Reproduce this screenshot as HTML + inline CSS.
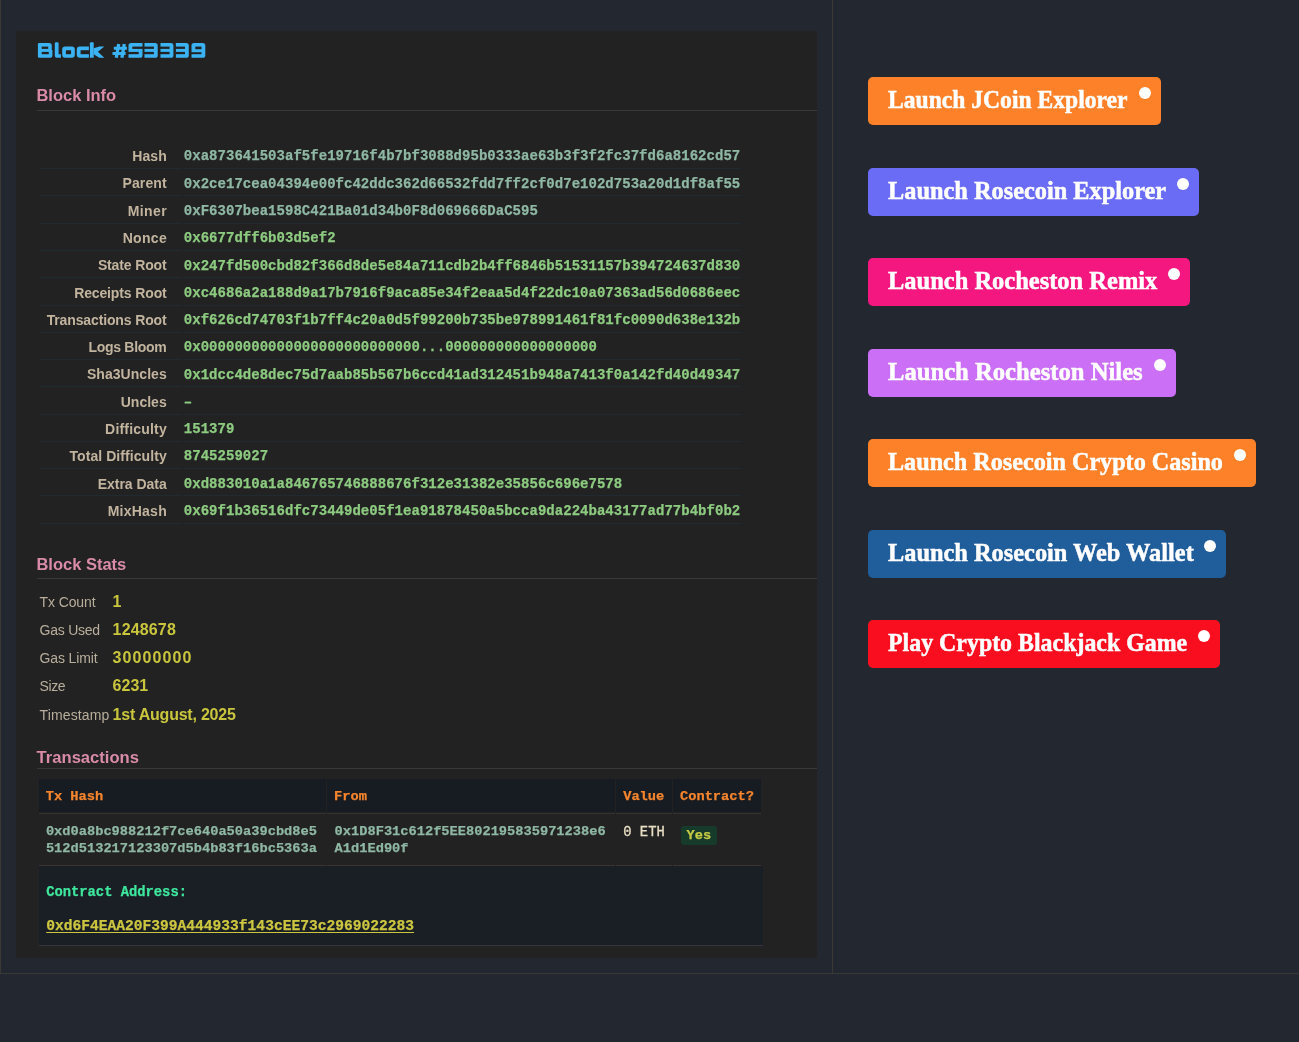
<!DOCTYPE html>
<html><head><meta charset="utf-8"><style>
html,body{margin:0;padding:0;width:1299px;height:1042px;overflow:hidden;background:#23272f;}
body>div{position:absolute;}
.t{position:absolute;line-height:0;white-space:nowrap;}
body{will-change:transform;}
</style></head><body>
<div style="left:0.00px;top:0.00px;width:1.00px;height:973.00px;background:#3a3936;"></div>
<div style="left:832.00px;top:0.00px;width:1.00px;height:973.00px;background:#3a3936;"></div>
<div style="left:0.00px;top:973.00px;width:1299.00px;height:1.00px;background:#3a3936;"></div>
<div style="left:16.00px;top:31.00px;width:801.00px;height:927.00px;background:#222222;"></div>
<div class="t" style="left:36.40px;top:86.00px;font:700 16.5px 'Liberation Sans', sans-serif;color:#d98ba8;">Block Info</div>
<div style="left:37.00px;top:110.00px;width:780.00px;height:1.00px;background:#3b3935;"></div>
<div class="t" style="right:1132.20px;top:148.00px;font:700 14px 'Liberation Sans', sans-serif;color:#c2b49e;text-align:right;letter-spacing:0.100px">Hash</div>
<div class="t" style="left:183.80px;top:148.00px;font:700 14px 'Liberation Mono', monospace;color:#8fb8a4;letter-spacing:0.03px;-webkit-text-stroke:0.25px #8fb8a4">0xa873641503af5fe19716f4b7bf3088d95b0333ae63b3f3f2fc37fd6a8162cd57</div>
<div style="left:39.00px;top:168.10px;width:143.00px;height:1.00px;background:#1f2a31;"></div>
<div style="left:184.00px;top:168.10px;width:557.00px;height:1.00px;background:#1f2a31;"></div>
<div class="t" style="right:1132.17px;top:175.00px;font:700 14px 'Liberation Sans', sans-serif;color:#c2b49e;text-align:right;letter-spacing:0.133px">Parent</div>
<div class="t" style="left:183.80px;top:176.00px;font:700 14px 'Liberation Mono', monospace;color:#8fb8a4;letter-spacing:0.03px;-webkit-text-stroke:0.25px #8fb8a4">0x2ce17cea04394e00fc42ddc362d66532fdd7ff2cf0d7e102d753a20d1df8af55</div>
<div style="left:39.00px;top:195.38px;width:143.00px;height:1.00px;background:#1f2a31;"></div>
<div style="left:184.00px;top:195.38px;width:557.00px;height:1.00px;background:#1f2a31;"></div>
<div class="t" style="right:1131.90px;top:203.00px;font:700 14px 'Liberation Sans', sans-serif;color:#c2b49e;text-align:right;letter-spacing:0.400px">Miner</div>
<div class="t" style="left:183.80px;top:203.00px;font:700 14px 'Liberation Mono', monospace;color:#8fb8a4;letter-spacing:0.03px;-webkit-text-stroke:0.25px #8fb8a4">0xF6307bea1598C421Ba01d34b0F8d069666DaC595</div>
<div style="left:39.00px;top:222.66px;width:143.00px;height:1.00px;background:#1f2a31;"></div>
<div style="left:184.00px;top:222.66px;width:557.00px;height:1.00px;background:#1f2a31;"></div>
<div class="t" style="right:1132.00px;top:230.00px;font:700 14px 'Liberation Sans', sans-serif;color:#c2b49e;text-align:right;letter-spacing:0.300px">Nonce</div>
<div class="t" style="left:183.80px;top:230.00px;font:700 14px 'Liberation Mono', monospace;color:#8dcb80;letter-spacing:0.03px;-webkit-text-stroke:0.25px #8dcb80">0x6677dff6b03d5ef2</div>
<div style="left:39.00px;top:249.94px;width:143.00px;height:1.00px;background:#1f2a31;"></div>
<div style="left:184.00px;top:249.94px;width:557.00px;height:1.00px;background:#1f2a31;"></div>
<div class="t" style="right:1132.43px;top:257.00px;font:700 14px 'Liberation Sans', sans-serif;color:#c2b49e;text-align:right;letter-spacing:-0.130px">State Root</div>
<div class="t" style="left:183.80px;top:258.00px;font:700 14px 'Liberation Mono', monospace;color:#8dcb80;letter-spacing:0.03px;-webkit-text-stroke:0.25px #8dcb80">0x247fd500cbd82f366d8de5e84a711cdb2b4ff6846b51531157b394724637d830</div>
<div style="left:39.00px;top:277.22px;width:143.00px;height:1.00px;background:#1f2a31;"></div>
<div style="left:184.00px;top:277.22px;width:557.00px;height:1.00px;background:#1f2a31;"></div>
<div class="t" style="right:1132.43px;top:285.00px;font:700 14px 'Liberation Sans', sans-serif;color:#c2b49e;text-align:right;letter-spacing:-0.131px">Receipts Root</div>
<div class="t" style="left:183.80px;top:285.00px;font:700 14px 'Liberation Mono', monospace;color:#8dcb80;letter-spacing:0.03px;-webkit-text-stroke:0.25px #8dcb80">0xc4686a2a188d9a17b7916f9aca85e34f2eaa5d4f22dc10a07363ad56d0686eec</div>
<div style="left:39.00px;top:304.50px;width:143.00px;height:1.00px;background:#1f2a31;"></div>
<div style="left:184.00px;top:304.50px;width:557.00px;height:1.00px;background:#1f2a31;"></div>
<div class="t" style="right:1132.43px;top:312.00px;font:700 14px 'Liberation Sans', sans-serif;color:#c2b49e;text-align:right;letter-spacing:-0.129px">Transactions Root</div>
<div class="t" style="left:183.80px;top:312.00px;font:700 14px 'Liberation Mono', monospace;color:#8dcb80;letter-spacing:0.03px;-webkit-text-stroke:0.25px #8dcb80">0xf626cd74703f1b7ff4c20a0d5f99200b735be978991461f81fc0090d638e132b</div>
<div style="left:39.00px;top:331.78px;width:143.00px;height:1.00px;background:#1f2a31;"></div>
<div style="left:184.00px;top:331.78px;width:557.00px;height:1.00px;background:#1f2a31;"></div>
<div class="t" style="right:1132.59px;top:339.00px;font:700 14px 'Liberation Sans', sans-serif;color:#c2b49e;text-align:right;letter-spacing:-0.290px">Logs Bloom</div>
<div class="t" style="left:183.80px;top:339.00px;font:700 14px 'Liberation Mono', monospace;color:#8dcb80;letter-spacing:0.03px;-webkit-text-stroke:0.25px #8dcb80">0x00000000000000000000000000...000000000000000000</div>
<div style="left:39.00px;top:359.06px;width:143.00px;height:1.00px;background:#1f2a31;"></div>
<div style="left:184.00px;top:359.06px;width:557.00px;height:1.00px;background:#1f2a31;"></div>
<div class="t" style="right:1132.26px;top:366.00px;font:700 14px 'Liberation Sans', sans-serif;color:#c2b49e;text-align:right;letter-spacing:0.040px">Sha3Uncles</div>
<div class="t" style="left:183.80px;top:367.00px;font:700 14px 'Liberation Mono', monospace;color:#8dcb80;letter-spacing:0.03px;-webkit-text-stroke:0.25px #8dcb80">0x1dcc4de8dec75d7aab85b567b6ccd41ad312451b948a7413f0a142fd40d49347</div>
<div style="left:39.00px;top:386.34px;width:143.00px;height:1.00px;background:#1f2a31;"></div>
<div style="left:184.00px;top:386.34px;width:557.00px;height:1.00px;background:#1f2a31;"></div>
<div class="t" style="right:1132.28px;top:394.00px;font:700 14px 'Liberation Sans', sans-serif;color:#c2b49e;text-align:right;letter-spacing:0.017px">Uncles</div>
<div class="t" style="left:183.80px;top:394.00px;font:700 14px 'Liberation Mono', monospace;color:#8dcb80;letter-spacing:0.03px;-webkit-text-stroke:0.25px #8dcb80">–</div>
<div style="left:39.00px;top:413.62px;width:143.00px;height:1.00px;background:#1f2a31;"></div>
<div style="left:184.00px;top:413.62px;width:557.00px;height:1.00px;background:#1f2a31;"></div>
<div class="t" style="right:1132.11px;top:421.00px;font:700 14px 'Liberation Sans', sans-serif;color:#c2b49e;text-align:right;letter-spacing:0.190px">Difficulty</div>
<div class="t" style="left:183.80px;top:421.00px;font:700 14px 'Liberation Mono', monospace;color:#8dcb80;letter-spacing:0.03px;-webkit-text-stroke:0.25px #8dcb80">151379</div>
<div style="left:39.00px;top:440.90px;width:143.00px;height:1.00px;background:#1f2a31;"></div>
<div style="left:184.00px;top:440.90px;width:557.00px;height:1.00px;background:#1f2a31;"></div>
<div class="t" style="right:1132.23px;top:448.00px;font:700 14px 'Liberation Sans', sans-serif;color:#c2b49e;text-align:right;letter-spacing:0.069px">Total Difficulty</div>
<div class="t" style="left:183.80px;top:448.00px;font:700 14px 'Liberation Mono', monospace;color:#8dcb80;letter-spacing:0.03px;-webkit-text-stroke:0.25px #8dcb80">8745259027</div>
<div style="left:39.00px;top:468.18px;width:143.00px;height:1.00px;background:#1f2a31;"></div>
<div style="left:184.00px;top:468.18px;width:557.00px;height:1.00px;background:#1f2a31;"></div>
<div class="t" style="right:1132.33px;top:476.00px;font:700 14px 'Liberation Sans', sans-serif;color:#c2b49e;text-align:right;letter-spacing:-0.030px">Extra Data</div>
<div class="t" style="left:183.80px;top:476.00px;font:700 14px 'Liberation Mono', monospace;color:#8dcb80;letter-spacing:0.03px;-webkit-text-stroke:0.25px #8dcb80">0xd883010a1a846765746888676f312e31382e35856c696e7578</div>
<div style="left:39.00px;top:495.46px;width:143.00px;height:1.00px;background:#1f2a31;"></div>
<div style="left:184.00px;top:495.46px;width:557.00px;height:1.00px;background:#1f2a31;"></div>
<div class="t" style="right:1132.06px;top:503.00px;font:700 14px 'Liberation Sans', sans-serif;color:#c2b49e;text-align:right;letter-spacing:0.243px">MixHash</div>
<div class="t" style="left:183.80px;top:503.00px;font:700 14px 'Liberation Mono', monospace;color:#8dcb80;letter-spacing:0.03px;-webkit-text-stroke:0.25px #8dcb80">0x69f1b36516dfc73449de05f1ea91878450a5bcca9da224ba43177ad77b4bf0b2</div>
<div style="left:39.00px;top:522.74px;width:143.00px;height:1.00px;background:#1f2a31;"></div>
<div style="left:184.00px;top:522.74px;width:557.00px;height:1.00px;background:#1f2a31;"></div>
<div class="t" style="left:36.40px;top:555.00px;font:700 16.5px 'Liberation Sans', sans-serif;color:#d98ba8;">Block Stats</div>
<div style="left:37.00px;top:578.00px;width:780.00px;height:1.00px;background:#3b3935;"></div>
<div class="t" style="left:39.60px;top:594.00px;font:400 14px 'Liberation Sans', sans-serif;color:#b9ae9c;letter-spacing:-0.12px">Tx Count</div>
<div class="t" style="left:112.60px;top:593.00px;font:700 16px 'Liberation Sans', sans-serif;color:#c9c63e;">1</div>
<div class="t" style="left:39.60px;top:622.00px;font:400 14px 'Liberation Sans', sans-serif;color:#b9ae9c;letter-spacing:-0.25px">Gas Used</div>
<div class="t" style="left:112.60px;top:621.00px;font:700 16px 'Liberation Sans', sans-serif;color:#c9c63e;letter-spacing:0.15px">1248678</div>
<div class="t" style="left:39.60px;top:650.00px;font:400 14px 'Liberation Sans', sans-serif;color:#b9ae9c;letter-spacing:-0.15px">Gas Limit</div>
<div class="t" style="left:112.60px;top:649.00px;font:700 16px 'Liberation Sans', sans-serif;color:#c9c63e;letter-spacing:1.1px">30000000</div>
<div class="t" style="left:39.60px;top:678.00px;font:400 14px 'Liberation Sans', sans-serif;color:#b9ae9c;letter-spacing:-0.40px">Size</div>
<div class="t" style="left:112.60px;top:677.00px;font:700 16px 'Liberation Sans', sans-serif;color:#c9c63e;">6231</div>
<div class="t" style="left:39.60px;top:707.00px;font:400 14px 'Liberation Sans', sans-serif;color:#b9ae9c;letter-spacing:0.12px">Timestamp</div>
<div class="t" style="left:112.60px;top:706.00px;font:700 16px 'Liberation Sans', sans-serif;color:#c9c63e;letter-spacing:-0.22px">1st August, 2025</div>
<div class="t" style="left:36.60px;top:748.00px;font:700 16.6px 'Liberation Sans', sans-serif;color:#d98ba8;">Transactions</div>
<div style="left:37.00px;top:768.00px;width:780.00px;height:1.00px;background:#3b3935;"></div>
<div style="left:38.90px;top:779.00px;width:286.70px;height:33.00px;background:#171b22;"></div>
<div style="left:38.90px;top:812.60px;width:286.70px;height:1.00px;background:#35322f;"></div>
<div style="left:38.90px;top:865.00px;width:286.70px;height:1.00px;background:#3a3530;"></div>
<div style="left:327.30px;top:779.00px;width:287.90px;height:33.00px;background:#171b22;"></div>
<div style="left:327.30px;top:812.60px;width:287.90px;height:1.00px;background:#35322f;"></div>
<div style="left:327.30px;top:865.00px;width:287.90px;height:1.00px;background:#3a3530;"></div>
<div style="left:616.40px;top:779.00px;width:55.40px;height:33.00px;background:#171b22;"></div>
<div style="left:616.40px;top:812.60px;width:55.40px;height:1.00px;background:#35322f;"></div>
<div style="left:616.40px;top:865.00px;width:55.40px;height:1.00px;background:#3a3530;"></div>
<div style="left:673.20px;top:779.00px;width:88.20px;height:33.00px;background:#171b22;"></div>
<div style="left:673.20px;top:812.60px;width:88.20px;height:1.00px;background:#35322f;"></div>
<div style="left:673.20px;top:865.00px;width:88.20px;height:1.00px;background:#3a3530;"></div>
<div class="t" style="left:45.70px;top:789.00px;font:700 13.7px 'Liberation Mono', monospace;color:#f5862e;;-webkit-text-stroke:0.25px #f5862e">Tx Hash</div>
<div class="t" style="left:334.10px;top:789.00px;font:700 13.7px 'Liberation Mono', monospace;color:#f5862e;;-webkit-text-stroke:0.25px #f5862e">From</div>
<div class="t" style="left:623.20px;top:789.00px;font:700 13.7px 'Liberation Mono', monospace;color:#f5862e;;-webkit-text-stroke:0.25px #f5862e">Value</div>
<div class="t" style="left:680.00px;top:789.00px;font:700 13.7px 'Liberation Mono', monospace;color:#f5862e;;-webkit-text-stroke:0.25px #f5862e">Contract?</div>
<div class="t" style="left:45.90px;top:824.00px;font:700 13.7px 'Liberation Mono', monospace;color:#8fb8a4;;-webkit-text-stroke:0.25px #8fb8a4">0xd0a8bc988212f7ce640a50a39cbd8e5</div>
<div class="t" style="left:45.90px;top:841.00px;font:700 13.7px 'Liberation Mono', monospace;color:#8fb8a4;;-webkit-text-stroke:0.25px #8fb8a4">512d513217123307d5b4b83f16bc5363a</div>
<div class="t" style="left:334.60px;top:824.00px;font:700 13.7px 'Liberation Mono', monospace;color:#8fb8a4;;-webkit-text-stroke:0.25px #8fb8a4">0x1D8F31c612f5EE802195835971238e6</div>
<div class="t" style="left:334.60px;top:841.00px;font:700 13.7px 'Liberation Mono', monospace;color:#8fb8a4;;-webkit-text-stroke:0.25px #8fb8a4">A1d1Ed90f</div>
<div class="t" style="left:623.30px;top:825.00px;font:400 13.8px 'Liberation Mono', monospace;color:#e8dec4;;-webkit-text-stroke:0.3px #e8dec4">0 ETH</div>
<div style="left:680.60px;top:825.80px;width:36.60px;height:19.00px;background:#173b2b;border-radius:3px"></div>
<div class="t" style="left:686.60px;top:828.00px;font:700 13.6px 'Liberation Mono', monospace;color:#c8cc44;;-webkit-text-stroke:0.25px #c8cc44">Yes</div>
<div style="left:38.90px;top:866.00px;width:724.00px;height:78.70px;background:#1a1f25;"></div>
<div style="left:38.90px;top:944.70px;width:724.00px;height:1.00px;background:#34343a;"></div>
<div class="t" style="left:46.20px;top:885.00px;font:700 13.8px 'Liberation Mono', monospace;color:#3ee79e;;-webkit-text-stroke:0.25px #3ee79e">Contract Address:</div>
<div class="t" style="left:46.20px;top:918.00px;font:700 14.6px 'Liberation Mono', monospace;color:#cdc640;text-decoration:underline;text-underline-offset:2px;-webkit-text-stroke:0.25px #cdc640">0xd6F4EAA20F399A444933f143cEE73c2969022283</div>
<div style="left:868.00px;top:77.00px;width:293.00px;height:48.00px;background:#fd8128;border-radius:5px"></div>
<div class="t" style="left:888.30px;top:86.00px;font:700 24.5px 'Liberation Serif', serif;color:#ffffff;transform:scaleX(0.9630);transform-origin:0 0;-webkit-text-stroke:0.5px #ffffff">Launch JCoin Explorer</div>
<div style="left:1139.00px;top:87.00px;width:12.00px;height:12.00px;background:#ffffff;border-radius:50%"></div>
<div style="left:868.00px;top:168.00px;width:331.00px;height:48.00px;background:#6b6cf6;border-radius:5px"></div>
<div class="t" style="left:888.30px;top:177.00px;font:700 24.5px 'Liberation Serif', serif;color:#ffffff;transform:scaleX(0.9936);transform-origin:0 0;-webkit-text-stroke:0.5px #ffffff">Launch Rosecoin Explorer</div>
<div style="left:1177.00px;top:178.00px;width:12.00px;height:12.00px;background:#ffffff;border-radius:50%"></div>
<div style="left:868.00px;top:258.20px;width:322.00px;height:48.00px;background:#f4177f;border-radius:5px"></div>
<div class="t" style="left:888.30px;top:267.00px;font:700 24.5px 'Liberation Serif', serif;color:#ffffff;transform:scaleX(0.9993);transform-origin:0 0;-webkit-text-stroke:0.5px #ffffff">Launch Rocheston Remix</div>
<div style="left:1168.00px;top:268.20px;width:12.00px;height:12.00px;background:#ffffff;border-radius:50%"></div>
<div style="left:868.00px;top:349.00px;width:308.00px;height:48.00px;background:#cb6ff7;border-radius:5px"></div>
<div class="t" style="left:888.30px;top:358.00px;font:700 24.5px 'Liberation Serif', serif;color:#ffffff;transform:scaleX(1.0059);transform-origin:0 0;-webkit-text-stroke:0.5px #ffffff">Launch Rocheston Niles</div>
<div style="left:1154.00px;top:359.00px;width:12.00px;height:12.00px;background:#ffffff;border-radius:50%"></div>
<div style="left:868.00px;top:439.00px;width:388.20px;height:48.00px;background:#fd8128;border-radius:5px"></div>
<div class="t" style="left:888.30px;top:448.00px;font:700 24.5px 'Liberation Serif', serif;color:#ffffff;transform:scaleX(0.9862);transform-origin:0 0;-webkit-text-stroke:0.5px #ffffff">Launch Rosecoin Crypto Casino</div>
<div style="left:1233.70px;top:449.00px;width:12.00px;height:12.00px;background:#ffffff;border-radius:50%"></div>
<div style="left:868.00px;top:530.00px;width:358.00px;height:48.00px;background:#1f5d9b;border-radius:5px"></div>
<div class="t" style="left:888.30px;top:539.00px;font:700 24.5px 'Liberation Serif', serif;color:#ffffff;transform:scaleX(0.9945);transform-origin:0 0;-webkit-text-stroke:0.5px #ffffff">Launch Rosecoin Web Wallet</div>
<div style="left:1204.00px;top:540.00px;width:12.00px;height:12.00px;background:#ffffff;border-radius:50%"></div>
<div style="left:868.00px;top:620.00px;width:352.00px;height:48.00px;background:#f80e1f;border-radius:5px"></div>
<div class="t" style="left:888.30px;top:629.00px;font:700 24.5px 'Liberation Serif', serif;color:#ffffff;transform:scaleX(0.9749);transform-origin:0 0;-webkit-text-stroke:0.5px #ffffff">Play Crypto Blackjack Game</div>
<div style="left:1198.00px;top:630.00px;width:12.00px;height:12.00px;background:#ffffff;border-radius:50%"></div>
<svg style="position:absolute;left:0;top:0" width="220" height="70" viewBox="0 0 220 70">
<g fill="#3bb3f3"><path d="M39.10 43.00 H49.20 Q51.80 43.00 51.80 45.60 V50.80 H37.90 V44.20 Q37.90 43.00 39.10 43.00 Z"/><path d="M37.90 50.00 H52.40 V55.20 Q52.40 57.80 49.80 57.80 H39.10 Q37.90 57.80 37.90 56.60 V50.00 Z"/><path d="M54.8 43.3 Q54.8 42.3 55.8 42.3 H57.6 Q58.6 42.3 58.6 43.3 V54.20 H60.9 V57.8 H57.4 Q54.8 57.8 54.8 55.20 Z"/><path d="M65.20 46.60 H71.80 Q74.80 46.60 74.80 49.60 V54.80 Q74.80 57.80 71.80 57.80 H65.20 Q62.20 57.80 62.20 54.80 V49.60 Q62.20 46.60 65.20 46.60 Z"/><path d="M79.80 46.60 H88.90 V57.80 H79.80 Q76.80 57.80 76.80 54.80 V49.60 Q76.80 46.60 79.80 46.60 Z"/><path d="M90.90 42.30 H92.70 Q93.70 42.30 93.70 43.30 V57.80 H89.90 V43.30 Q89.90 42.30 90.90 42.30 Z"/><path d="M131.10 43.00 H142.50 V55.20 Q142.50 57.80 139.90 57.80 H128.50 V45.60 Q128.50 43.00 131.10 43.00 Z"/><path d="M144.50 43.00 H155.10 Q157.70 43.00 157.70 45.60 V55.20 Q157.70 57.80 155.10 57.80 H144.50 V43.00 Z"/><path d="M160.50 43.00 H170.80 Q173.40 43.00 173.40 45.60 V55.20 Q173.40 57.80 170.80 57.80 H160.50 V43.00 Z"/><path d="M175.90 43.00 H186.20 Q188.80 43.00 188.80 45.60 V55.20 Q188.80 57.80 186.20 57.80 H175.90 V43.00 Z"/><path d="M194.10 43.00 H202.70 Q205.30 43.00 205.30 45.60 V55.20 Q205.30 57.80 202.70 57.80 H191.50 V45.60 Q191.50 43.00 194.10 43.00 Z"/>
<polygon points="93.6,48.3 99.3,46.6 104.3,46.6 97.3,52.2 93.6,52.2"/>
<polygon points="93.6,51.2 97.3,51.2 104.3,57.8 99.3,57.8 93.6,54.3"/>
</g>
<g fill="#222222"><path d="M41.70 46.60 H48.20 V48.90 H41.70 V46.60 Z"/><path d="M41.70 51.90 H48.80 V54.20 H41.70 V51.90 Z"/><path d="M66.50 50.20 H70.50 Q71.10 50.20 71.10 50.80 V53.60 Q71.10 54.20 70.50 54.20 H66.50 Q65.90 54.20 65.90 53.60 V50.80 Q65.90 50.20 66.50 50.20 Z"/><path d="M80.60 50.20 H89.50 V54.20 H80.60 V50.20 Z"/><path d="M132.30 46.60 H143.00 V48.90 H132.30 V46.60 Z"/><path d="M128.00 51.90 H138.70 V54.20 H128.00 V51.90 Z"/><path d="M144.00 46.60 H153.90 V48.90 H144.00 V46.60 Z"/><path d="M144.00 51.90 H153.90 V54.20 H144.00 V51.90 Z"/><path d="M160.00 46.60 H169.60 V48.90 H160.00 V46.60 Z"/><path d="M160.00 51.90 H169.60 V54.20 H160.00 V51.90 Z"/><path d="M175.40 46.60 H185.00 V48.90 H175.40 V46.60 Z"/><path d="M175.40 51.90 H185.00 V54.20 H175.40 V51.90 Z"/><path d="M195.30 46.60 H201.50 V49.20 H195.30 V46.60 Z"/><path d="M191.00 52.20 H201.50 V54.20 H191.00 V52.20 Z"/></g>
<g fill="none" stroke="#3bb3f3" stroke-linejoin="round" stroke-linecap="butt">
<path d="M113.8 48.3 H126.9 M112.5 53.5 H125.6" stroke-width="2.9"/>
<path d="M118.7 44 L116.3 57.7 M124.3 44 L121.9 57.7" stroke-width="3.3"/>
</g>
</svg>
</body></html>
